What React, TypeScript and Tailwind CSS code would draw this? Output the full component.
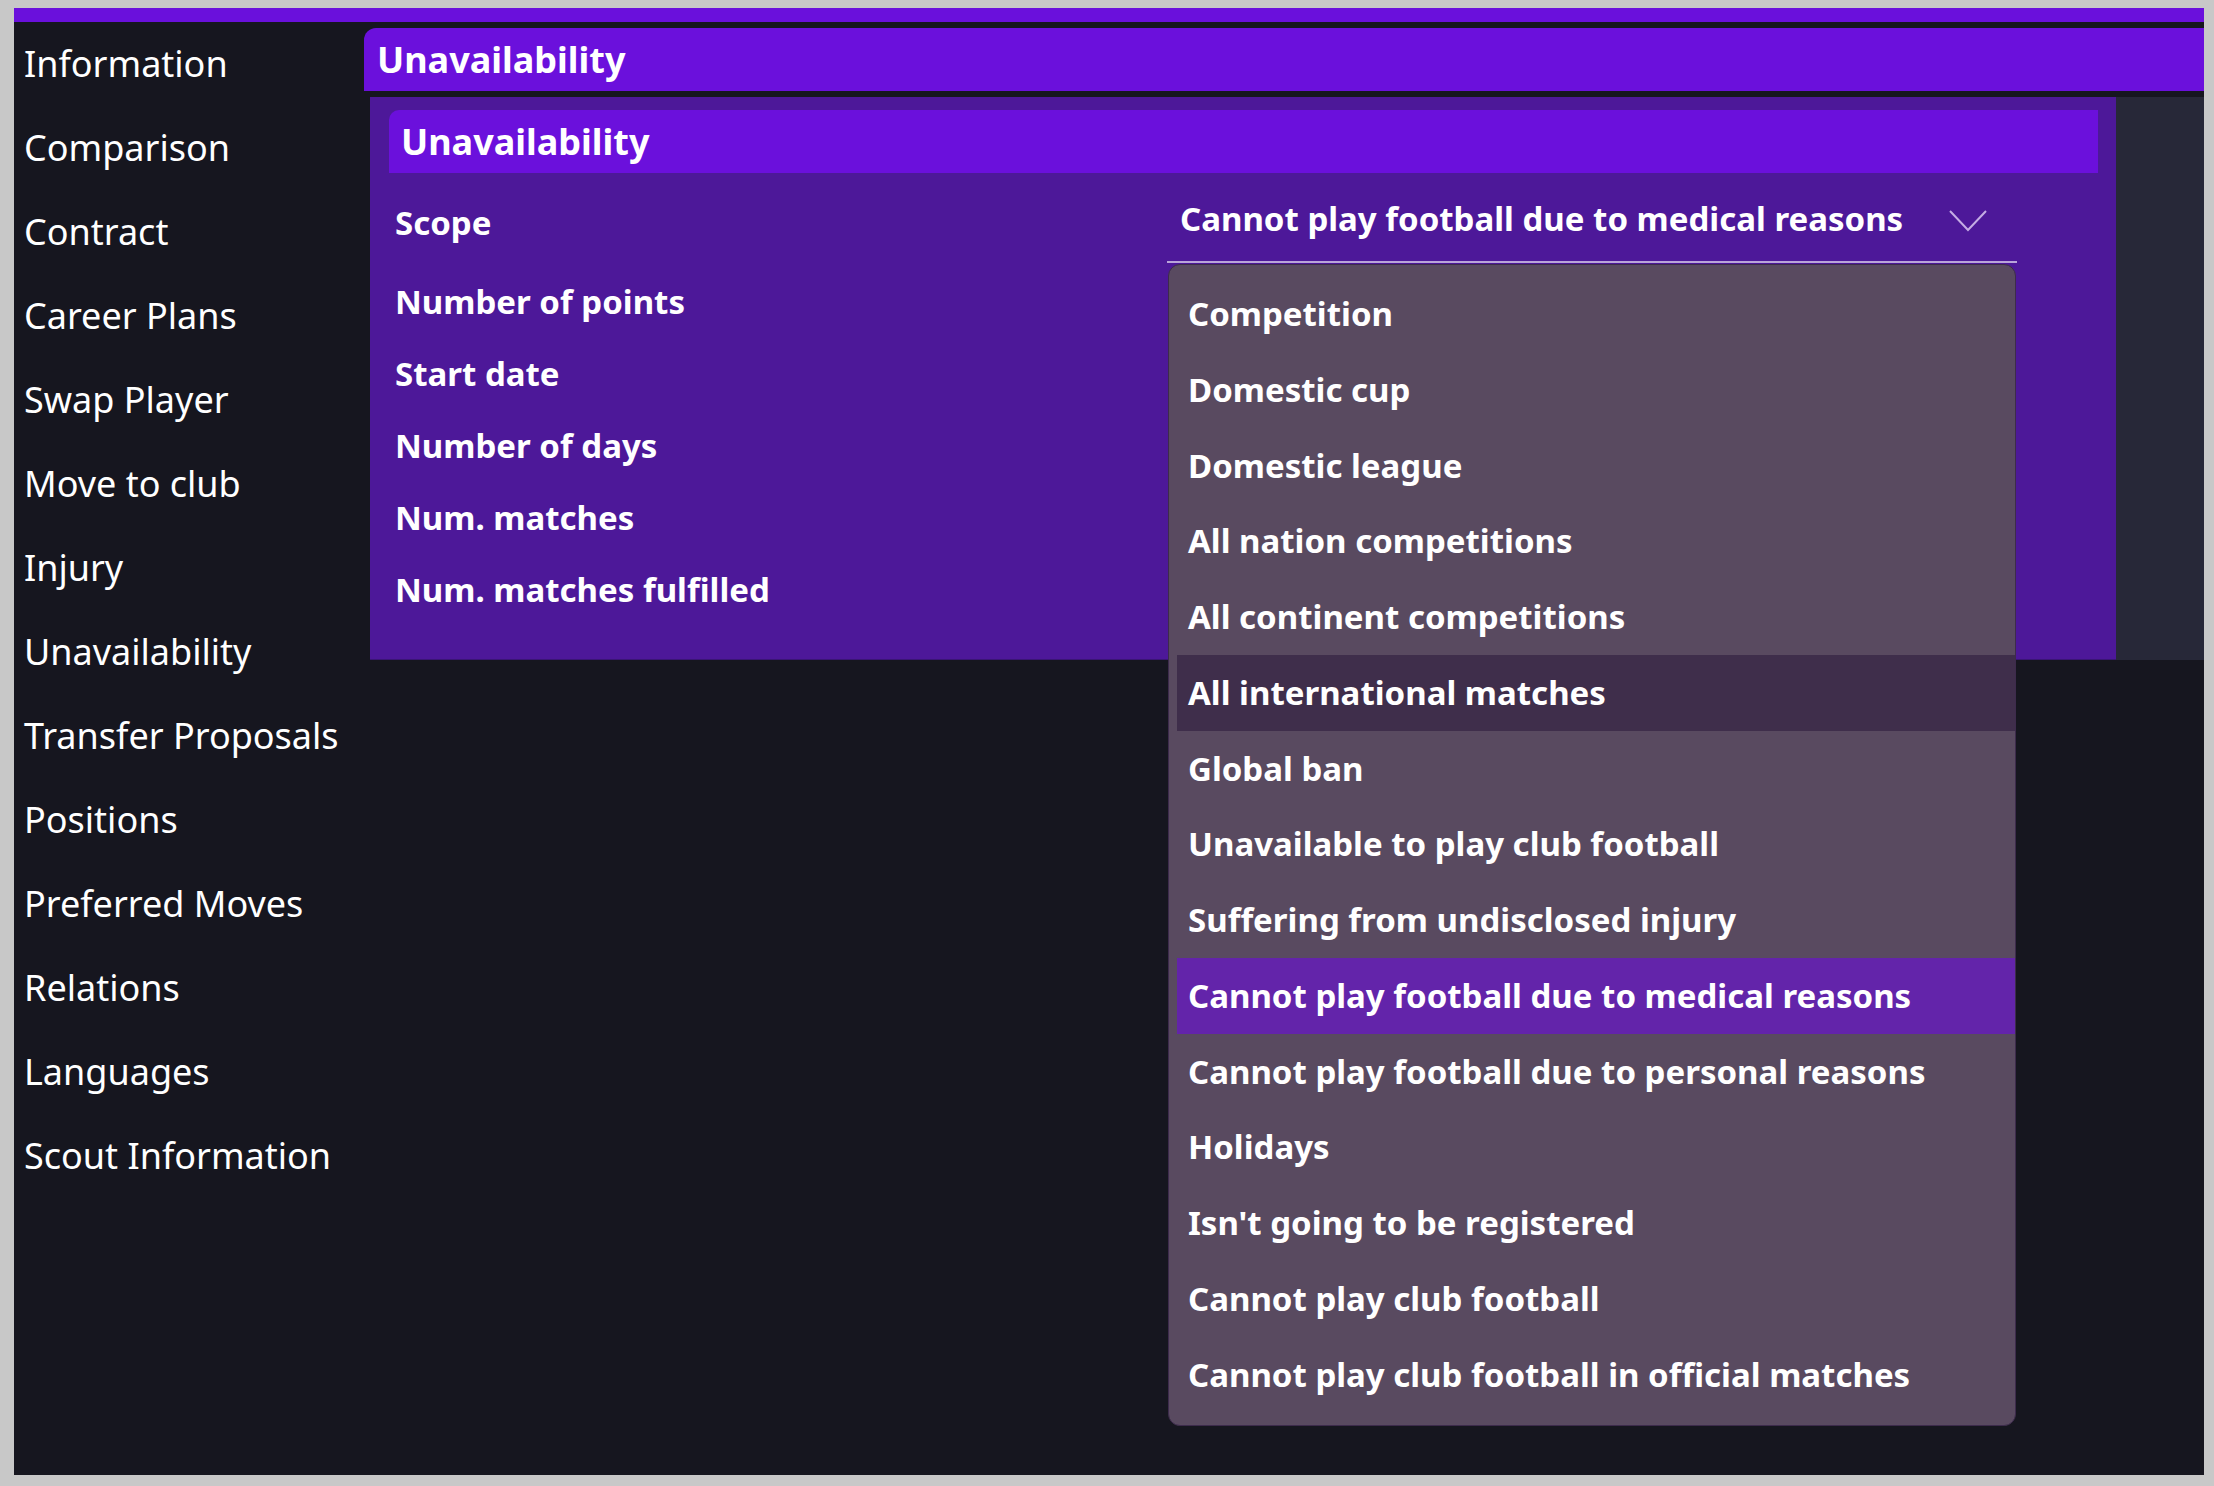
import React from 'react';

const navItems = [
  'Information',
  'Comparison',
  'Contract',
  'Career Plans',
  'Swap Player',
  'Move to club',
  'Injury',
  'Unavailability',
  'Transfer Proposals',
  'Positions',
  'Preferred Moves',
  'Relations',
  'Languages',
  'Scout Information',
];

const fields = ['Number of points', 'Start date', 'Number of days', 'Num. matches', 'Num. matches fulfilled'];

const options = [
  'Competition',
  'Domestic cup',
  'Domestic league',
  'All nation competitions',
  'All continent competitions',
  'All international matches',
  'Global ban',
  'Unavailable to play club football',
  'Suffering from undisclosed injury',
  'Cannot play football due to medical reasons',
  'Cannot play football due to personal reasons',
  'Holidays',
  "Isn't going to be registered",
  'Cannot play club football',
  'Cannot play club football in official matches',
];

const hovered = 'All international matches';
const selected = 'Cannot play football due to medical reasons';

function ScopeSelect() {
  return (
    <div className="relative w-[850px] h-[92px]">
      <div className="flex items-center h-[90px] pl-[13px] pr-[30px] pt-[3px] border-b-2 border-[#b9a4d9]">
        <span className="flex-1 text-[33px] leading-[40px] font-bold text-white">{selected}</span>
        <svg width="38" height="22" viewBox="0 0 38 22" fill="none" className="mt-[4px]">
          <path d="M1 1 L19 20 L37 1" stroke="#c4ace4" strokeWidth="2" />
        </svg>
      </div>
      {/* open menu */}
      <div className="absolute left-[1px] top-[91px] w-[848px] z-10 bg-[#594a60] border border-[#3d2b4c] rounded-[12px] pt-[11px] pb-[13px]">
        {options.map((o) => (
          <div
            key={o}
            className={
              'flex items-center h-[75.75px] ml-[8px] pl-[11px] text-[33px] font-bold text-white ' +
              (o === selected ? 'bg-[#6324aa]' : o === hovered ? 'bg-[#3f2e4b]' : '')
            }
          >
            {o}
          </div>
        ))}
      </div>
    </div>
  );
}

export default function App() {
  return (
    <div
      className="w-[2214px] h-[1486px] bg-[#c8c8c8] pt-[8px] pl-[14px] pr-[10px] pb-[11px]"
      style={{ fontFamily: '"Noto Sans", "Open Sans", sans-serif' }}
    >
      <div className="h-full flex flex-col bg-[#16161f]">
        <div className="h-[14px] bg-[#6a10dc]" />
        <div className="flex flex-1">
          {/* sidebar */}
          <div className="w-[350px] flex flex-col pl-[10px]">
            {navItems.map((n) => (
              <div key={n} className="h-[84px] flex items-center text-[36px] text-white">
                {n}
              </div>
            ))}
          </div>

          {/* main */}
          <div className="flex-1 flex flex-col pt-[6px]">
            <div className="h-[63px] flex items-center pl-[13px] bg-[#6b10dc] rounded-tl-[12px] text-[36px] font-bold text-white">
              Unavailability
            </div>
            <div className="flex mt-[6px] ml-[6px] h-[563px]">
              <div className="w-[1746px] bg-[#4d1899] border-b border-[#3a1575] pt-[13px] pl-[19px] pr-[18px]">
                <div className="h-[63px] flex items-center pl-[12px] bg-[#6b10dc] rounded-tl-[10px] text-[36px] font-bold text-white">
                  Unavailability
                </div>
                <div className="flex">
                  <div className="w-[778px] flex flex-col pl-[6px]">
                    <div className="h-[92px] pt-[30px] text-[33px] leading-[40px] font-bold text-white">Scope</div>
                    {fields.map((f) => (
                      <div key={f} className="h-[72px] pt-[2px] flex items-center text-[33px] font-bold text-white">
                        {f}
                      </div>
                    ))}
                  </div>
                  <ScopeSelect />
                </div>
              </div>
              <div className="flex-1 bg-[#272838]" />
            </div>
          </div>
        </div>
      </div>
    </div>
  );
}
